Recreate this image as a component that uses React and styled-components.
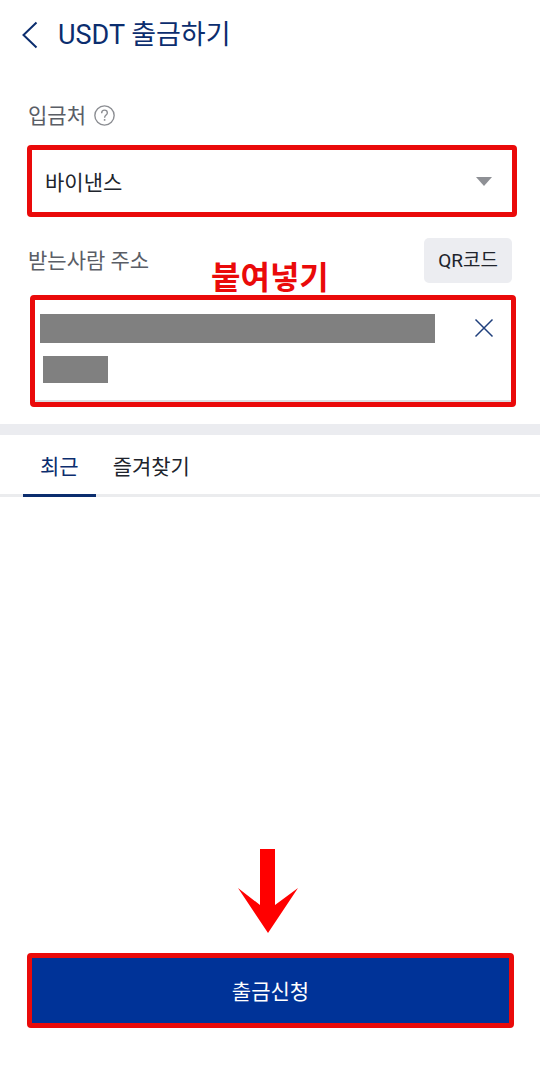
import React, { useState } from "react";
import styled, { createGlobalStyle } from "styled-components";

const GlobalStyle = createGlobalStyle`
  * {
    box-sizing: border-box;
  }
  body {
    margin: 0;
    background: #ffffff;
    color: #20242c;
    font-family: Roboto, "Noto Sans CJK KR", sans-serif;
    font-size: 21px;
    line-height: 32px;
  }
  button,
  select,
  textarea {
    margin: 0;
    font: inherit;
    color: inherit;
  }
`;

const Page = styled.div`
  display: flex;
  flex-direction: column;
  min-height: 100vh;
`;

const Header = styled.header`
  display: flex;
  align-items: center;
  gap: 16px;
  height: 69px;
  padding: 0 20px;
  color: #0b2d6e;
`;

const IconButton = styled.button`
  display: flex;
  padding: 0;
  border: 0;
  background: none;
  color: #0b2d6e;
  cursor: pointer;
`;

const Title = styled.h1`
  margin: 0;
  font-size: 27px;
  font-weight: 400;
`;

const Form = styled.form`
  padding: 32px 24px 17px 28px;
`;

const LabelRow = styled.div`
  position: relative;
  display: flex;
  align-items: center;
  justify-content: ${(props) => (props.$spread ? "space-between" : "flex-start")};
  gap: 8px;
  height: ${(props) => (props.$spread ? "78px" : "32px")};
  padding: ${(props) => (props.$spread ? "8px 0 0" : "0 0 4px")};
`;

const Label = styled.label`
  padding-top: 2px;
  color: #5a5e66;
`;

const Highlight = styled.div`
  position: relative;
  border: 5px solid #ea0a0a;
  border-radius: 4px;
`;

const SelectBox = styled(Highlight)`
  height: 72px;
  margin: 12px -1px 0;
`;

const Select = styled.select`
  display: block;
  width: 100%;
  height: 100%;
  padding: 4px 40px 0 13px;
  border: 0;
  outline: 0;
  appearance: none;
  background: transparent;
`;

const Caret = styled.svg`
  position: absolute;
  top: 27px;
  right: 20px;
  pointer-events: none;
`;

const QrButton = styled.button`
  height: 45px;
  padding: 2px 14px 0;
  margin-right: 4px;
  border: 0;
  border-radius: 5px;
  background: #ecedf1;
  font-size: 19px;
  cursor: pointer;
`;

const Note = styled.strong`
  position: absolute;
  top: 45px;
  left: 183px;
  color: #ea0a0a;
  font-size: 32px;
  font-weight: 700;
  pointer-events: none;
`;

const AddressBox = styled(Highlight)`
  height: 112px;
  margin: 0 0 0 2px;
  box-shadow: inset 0 -2px 0 #dcdde0;
`;

const Address = styled.textarea`
  display: block;
  width: 100%;
  height: 100px;
  padding: 12px 72px 12px 8px;
  border: 0;
  outline: 0;
  resize: none;
  background: transparent;
`;

const Mask = styled.div`
  position: absolute;
  top: 14px;
  left: 5px;
  right: 76px;
  display: flex;
  flex-direction: column;
  gap: 13px;
`;

const MaskLine = styled.span`
  width: ${(props) => (props.$short ? "65px" : "100%")};
  height: ${(props) => (props.$short ? "27px" : "29px")};
  margin-left: ${(props) => (props.$short ? "3px" : "0")};
  background: #808080;
`;

const ClearButton = styled(IconButton)`
  position: absolute;
  top: 18px;
  right: 17px;
`;

const Tabs = styled.nav`
  display: flex;
  padding: 0 23px;
  border-top: 11px solid #ebecf0;
  box-shadow: inset 0 -3px 0 #ebecee;
`;

const Tab = styled.button`
  height: 62px;
  padding: 5px 17px 0;
  border: 0;
  border-bottom: 3px solid ${(props) => (props.$active ? "#0b2d6e" : "transparent")};
  background: none;
  color: ${(props) => (props.$active ? "#0b2d6e" : "#20242c")};
  cursor: pointer;
`;

const Footer = styled.footer`
  display: flex;
  flex-direction: column;
  align-items: center;
  gap: 20px;
  margin-top: auto;
  padding: 0 26px 47px 27px;
`;

const SubmitButton = styled.button`
  width: 100%;
  height: 75px;
  padding: 2px 0 0;
  border: 5px solid #ea0a0a;
  border-radius: 4px;
  background: #003398;
  color: #ffffff;
  cursor: pointer;
`;

const App = () => {
  const [tab, setTab] = useState("recent");
  const [address, setAddress] = useState("");

  return (
    <>
      <GlobalStyle />
      <Page>
        <Header>
          <IconButton type="button" aria-label="뒤로">
            <svg width="22" height="28" viewBox="0 0 22 28" fill="none">
              <path d="M16.5 1.5 3.5 14l13 12.5" stroke="currentColor" strokeWidth="2" />
            </svg>
          </IconButton>
          <Title>USDT 출금하기</Title>
        </Header>

        <Form id="withdraw" onSubmit={(e) => e.preventDefault()}>
          <LabelRow>
            <Label htmlFor="exchange">입금처</Label>
            <IconButton type="button" aria-label="도움말">
              <svg width="21" height="21" viewBox="0 0 20 20" fill="none" stroke="#8b8d92">
                <circle cx="10" cy="10" r="9.2" strokeWidth="1.3" />
                <path d="M7.3 7.8c0-1.7 1.1-2.9 2.7-2.9s2.7 1 2.7 2.6c0 2-2.6 2.2-2.6 4.6" strokeWidth="1.3" />
                <path d="M10.1 13.4v1.6" strokeWidth="1.5" />
              </svg>
            </IconButton>
          </LabelRow>
          <SelectBox>
            <Select id="exchange" defaultValue="binance">
              <option value="binance">바이낸스</option>
            </Select>
            <Caret width="16" height="9" viewBox="0 0 16 9">
              <path d="M0 0h16L8 9z" fill="#8e9095" />
            </Caret>
          </SelectBox>

          <LabelRow $spread>
            <Label htmlFor="address">받는사람 주소</Label>
            <QrButton type="button">QR코드</QrButton>
            <Note>붙여넣기</Note>
          </LabelRow>
          <AddressBox>
            <Address id="address" value={address} onChange={(e) => setAddress(e.target.value)} />
            <Mask>
              <MaskLine />
              <MaskLine $short />
            </Mask>
            <ClearButton type="button" aria-label="지우기" onClick={() => setAddress("")}>
              <svg width="20" height="20" viewBox="0 0 20 20" fill="none">
                <path d="m1.5 1.5 17 17m0-17-17 17" stroke="#1f3f7c" strokeWidth="1.5" />
              </svg>
            </ClearButton>
          </AddressBox>
        </Form>

        <Tabs>
          <Tab type="button" $active={tab === "recent"} onClick={() => setTab("recent")}>
            최근
          </Tab>
          <Tab type="button" $active={tab === "favorites"} onClick={() => setTab("favorites")}>
            즐겨찾기
          </Tab>
        </Tabs>

        <Footer>
          <svg width="66" height="84" viewBox="0 0 66 84">
            <path d="M22 0h15v56l23-17-30 45L0 39l22 17z" fill="#ff0000" />
          </svg>
          <SubmitButton type="submit" form="withdraw">
            출금신청
          </SubmitButton>
        </Footer>
      </Page>
    </>
  );
};

export default App;
